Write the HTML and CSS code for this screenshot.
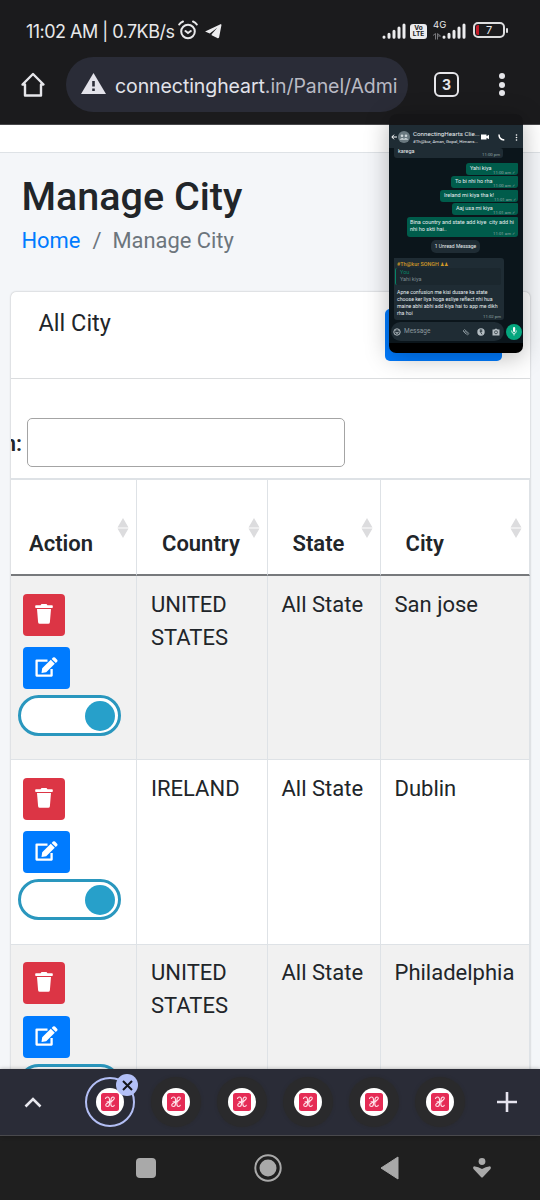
FILE: index.html
```html
<!DOCTYPE html>
<html lang="en">
<head>
<meta charset="utf-8">
<title>Manage City</title>
<link rel="stylesheet" href="styles.css">
</head>
<body>
<svg class="defs" width="0" height="0">
  <symbol id="trash" viewBox="0 0 18 20"><path fill="#fff" d="M6.500 0h5l1 1.200H17q.8 0 .8.800v1.300q0 .7-.7.700H.9q-.7 0-.7-.7V2q0-.8.8-.8h4.500zM2 5h14l-1.100 13.200q-.2 1.500-1.600 1.500H4.700q-1.400 0-1.600-1.500z"/></symbol>
  <symbol id="edit" viewBox="0 0 23 20"><path fill="none" stroke="#fff" stroke-width="2.300" stroke-linejoin="round" d="M12.500 3.600H1.600V18.600H16.600V12"/><path fill="#fff" d="M15.800 2.800l4 4-8.600 8.400-4.700.8.700-4.800zM16.700 1.900l1.300-1.300q1-.9 2 0l2.100 2.100q.9 1 0 2l-1.300 1.300z"/></symbol>
  <symbol id="sort" viewBox="0 0 12 20"><path fill="#dcdcde" d="M6 0l5.500 9.400H.5zM6 20l5.500-9.400H.5z"/></symbol>
  <symbol id="bars" viewBox="0 0 24 16"><path stroke="#ececee" stroke-width="3" stroke-linecap="round" d="M2 14v.3M7 11.200v3.100M12 8.200v6.100M17 5v9.300M22 2v12.300"/></symbol>
  <symbol id="favicon" viewBox="0 0 28 28"><circle cx="14" cy="14" r="14" fill="#fff"/><rect x="5" y="5" width="18" height="18" rx="2.500" fill="#e52b55"/><path fill="none" stroke="#ffe3ea" stroke-width="1.100" stroke-linecap="round" d="M9.500 10.500Q10 9 11.500 9q2 0 2 3v3.500q0 3-2 3-1.800 0-1.800-1.500 0-1.300 3.800-3 4.800-2 4.800-3.800 0-1.200-1.200-1.200-2 0-2.300 3.500v3q0 3 1.700 3 1.500 0 1.800-1.300M11 13.800h5"/></symbol>
</svg>
<div class="screen">
  <header class="browser">
    <div class="status">
      <span class="clock">11:02 AM | 0.7KB/s</span>
      <svg class="alarm" width="20" height="20" viewBox="0 0 20 20" fill="none" stroke="#e8e8ea" stroke-width="2" stroke-linecap="round"><circle cx="10" cy="11.500" r="6.800"/><path d="M1.200 4.500Q2.500 2.500 5 1.500M18.800 4.500Q17.500 2.500 15 1.500M7.500 11l2.500 2 2.800-2"/></svg>
      <svg class="plane" width="17" height="15" viewBox="0 0 18 16"><path fill="#ececee" d="M17 0L0 8l5 2 8-6-6 7v1l6 3c1 .5 1.700 0 2-1L17.500 1z"/></svg>
      <svg class="signal" width="24" height="16"><use href="#bars"/></svg>
      <span class="volte"><span>Vo</span><span>LTE</span></span>
      <span class="network"><span class="net">4G</span><svg width="8" height="7" viewBox="0 0 8 7" fill="none" stroke="#77777b"><path d="M0 2.500L2.500.5v6M4.500 6.500v-6L7.500 3H5"/></svg></span>
      <svg class="signal second" width="24" height="16"><use href="#bars"/></svg>
      <span class="battery"><i></i>7</span>
    </div>
    <div class="toolbar">
      <svg width="26" height="26" viewBox="0 0 26 26" fill="none" stroke="#e6e6ea" stroke-width="2.400" stroke-linejoin="round" stroke-linecap="round"><path d="M2.500 12.500L13 2l10.500 10.500H21V23.500H5V12.500z"/></svg>
      <div class="address">
        <svg width="25" height="21" viewBox="0 0 25 21"><path fill="#e3e3ea" d="M12.500 0L25 21H0z"/><path fill="#2a2c37" d="M11.200 8h2.600v5.500h-2.600zM11.200 15.500h2.600v2.500h-2.600z"/></svg>
        <span class="url">connectingheart<b>.in/Panel/Admi</b></span>
      </div>
      <span class="tabs">3</span>
      <span class="dots"><i></i><i></i><i></i></span>
    </div>
  </header>

  <main class="page">
    <div class="navbar"></div>
    <div class="heading">
      <h1>Manage City</h1>
      <div class="crumbs"><a>Home</a><span class="slash">/</span><span>Manage City</span></div>
    </div>
    <section class="card">
      <div class="card-head"><span>All City</span><div class="add"></div></div>
      <div class="search"><div class="label-clip"><b>n:</b></div><input type="text"></div>
      <div class="row head">
        <div class="cell">Action<svg width="12" height="20"><use href="#sort"/></svg></div>
        <div class="cell">Country<svg width="12" height="20"><use href="#sort"/></svg></div>
        <div class="cell">State<svg width="12" height="20"><use href="#sort"/></svg></div>
        <div class="cell">City<svg width="12" height="20"><use href="#sort"/></svg></div>
      </div>
      <div class="row odd">
        <div class="cell actions"><div class="btn red"><svg width="18" height="20"><use href="#trash"/></svg></div><div class="btn blue"><svg width="23" height="20"><use href="#edit"/></svg></div><div class="switch"><i></i></div></div>
        <div class="cell">UNITED STATES</div><div class="cell">All State</div><div class="cell">San jose</div>
      </div>
      <div class="row">
        <div class="cell actions"><div class="btn red"><svg width="18" height="20"><use href="#trash"/></svg></div><div class="btn blue"><svg width="23" height="20"><use href="#edit"/></svg></div><div class="switch"><i></i></div></div>
        <div class="cell">IRELAND</div><div class="cell">All State</div><div class="cell">Dublin</div>
      </div>
      <div class="row odd">
        <div class="cell actions"><div class="btn red"><svg width="18" height="20"><use href="#trash"/></svg></div><div class="btn blue"><svg width="23" height="20"><use href="#edit"/></svg></div><div class="switch"><i></i></div></div>
        <div class="cell">UNITED STATES</div><div class="cell">All State</div><div class="cell">Philadelphia</div>
      </div>
    </section>
  </main>

  <div class="tabstrip">
    <svg width="18" height="12" viewBox="0 0 18 12" fill="none" stroke="#e8e8ee" stroke-width="2.600"><path d="M1.500 10.500L9 3l7.500 7.500"/></svg>
    <div class="tab active"><svg width="28" height="28"><use href="#favicon"/></svg><span class="close"><svg width="11" height="11" viewBox="0 0 11 11" stroke="#15161c" stroke-width="2"><path d="M1 1l9 9M10 1l-9 9"/></svg></span></div>
    <div class="tab"><svg width="28" height="28"><use href="#favicon"/></svg></div>
    <div class="tab"><svg width="28" height="28"><use href="#favicon"/></svg></div>
    <div class="tab"><svg width="28" height="28"><use href="#favicon"/></svg></div>
    <div class="tab"><svg width="28" height="28"><use href="#favicon"/></svg></div>
    <div class="tab"><svg width="28" height="28"><use href="#favicon"/></svg></div>
    <svg class="plus" width="20" height="20" viewBox="0 0 20 20" stroke="#e6e4ee" stroke-width="2.600"><path d="M10 0v20M0 10h20"/></svg>
  </div>
  <nav class="sysnav">
    <i class="recent"></i>
    <svg class="home" width="28" height="28" viewBox="0 0 28 28"><circle cx="14" cy="14" r="12.700" fill="none" stroke="#a9a9a9" stroke-width="2"/><circle cx="14" cy="14" r="8.500" fill="#a9a9a9"/></svg>
    <svg class="back" width="19" height="24" viewBox="0 0 19 24"><path fill="#a9a9a9" stroke="#a9a9a9" stroke-linejoin="round" d="M1 12L18 1v22z"/></svg>
    <svg class="access" width="18" height="20" viewBox="0 0 18 20" fill="#a9a9a9"><circle cx="9" cy="3.500" r="3.400"/><path d="M1 8.300Q5.500 9 9 11q3.500-2 8-2.700 1.500 1 .5 2.700L10 19q-1 1-2 0L.5 11Q-.5 9.300 1 8.300z"/></svg>
  </nav>

  <aside class="chat">
    <div class="chat-head">
      <svg width="6" height="6" viewBox="0 0 6 6" fill="none" stroke="#fff"><path d="M6 3H1M3 .7L.8 3 3 5.300"/></svg>
      <svg width="12" height="12" viewBox="0 0 12 12"><circle cx="6" cy="6" r="6" fill="#6a7980"/><g fill="#cdd5d8"><circle cx="4" cy="4.800" r="1.300"/><circle cx="8" cy="4.800" r="1.300"/><path d="M1.500 8.700q2.500-3 4.500-.8 2-2.200 4.500.8z"/></g></svg>
      <div class="chat-title"><span>ConnectingHearts Clie...</span><small>#Th@kur, Aman, Gopal, Himans...</small></div>
      <svg class="cam" width="8" height="6" viewBox="0 0 8 6"><path fill="#fff" d="M0 .5h5.500v1.800L8 .8v4.400L5.500 3.700v1.800H0z"/></svg>
      <svg class="call" width="7" height="7" viewBox="0 0 7 7"><path fill="none" stroke="#fff" stroke-width="1.500" d="M1 .5Q1 5.500 6.300 6"/></svg>
      <svg class="more" width="3" height="7" viewBox="0 0 3 7" fill="#fff"><circle cx="1.500" cy="1" r=".8"/><circle cx="1.500" cy="3.500" r=".8"/><circle cx="1.500" cy="6" r=".8"/></svg>
    </div>
    <div class="in first"><span>karega</span><time>11:00 pm</time></div>
    <div class="out b1"><span>Yahi kiya</span><time>11:00 am ✓</time></div>
    <div class="out b2"><span>To bi nhi ho rha</span><time>11:00 am ✓</time></div>
    <div class="out b3"><span>Ireland mi kiya tha k!</span><time>11:01 am ✓</time></div>
    <div class="out b4"><span>Aaj usa mi kiya</span><time>11:01 am ✓</time></div>
    <div class="out b5"><span>Bina country and state add kiye&nbsp; city add hi<br>nhi ho skti hai..</span><time>11:01 am ✓</time></div>
    <div class="unread">1 Unread Message</div>
    <div class="in reply"><strong>#Th@kur SONGH ♟♟</strong><div class="quote"><em>You</em><span>Yahi kiya</span></div><p>Apne confusion me kisi dusare ka state<br>choose ker liya hoga esliye reflect nhi hua<br>maine abhi abhi add kiya hai to app me dikh<br>rha hoi</p><time>11:02 pm</time></div>
    <div class="compose">
      <div class="field">
        <svg width="8" height="8" viewBox="0 0 8 8"><circle cx="4" cy="4" r="3.200" fill="none" stroke="#b4bdc2"/><path d="M2 4.200h4Q4 7.500 2 4.200zM2.300 2.300h1v1h-1zM4.700 2.300h1v1h-1z" fill="#b4bdc2"/></svg>
        <span>Message</span>
        <svg width="8" height="8" viewBox="0 0 8 8" fill="none" stroke="#8d999f" stroke-width=".8"><path d="M1 3l1.500-1.500L7 5.500 5.500 7 2 3.800l1-1 3 2.700M1 3l3 3"/></svg>
        <svg width="8" height="8" viewBox="0 0 8 8"><circle cx="4" cy="4" r="3.700" fill="#b4bdc2"/><path d="M2.700 2h2.600M2.700 3.300h2.600M3.300 2q2 .3.200 2L5 6.300" fill="none" stroke="#1f2c34" stroke-width=".8"/></svg>
        <svg width="8" height="8" viewBox="0 0 8 8"><path fill="#b4bdc2" d="M.5 1.500H2.500L3 .7h2l.5.8h2v6h-7z"/><circle cx="4" cy="4.300" r="1.500" fill="none" stroke="#1f2c34" stroke-width=".7"/></svg>
      </div>
      <div class="mic"><svg width="6" height="9" viewBox="0 0 6 9"><rect x="2" y="0" width="2.200" height="5" rx="1.100" fill="#fff"/><path d="M.6 3.500q0 3 2.400 3t2.400-3M3 6.500v2" fill="none" stroke="#fff" stroke-width=".8"/></svg></div>
    </div>
  </aside>
</div>
</body>
</html>
```
FILE: styles.css
```css
* { box-sizing: border-box; }
body { margin: 0; font-family: Roboto, "Liberation Sans", sans-serif; color: #212529; }
svg { display: block; flex: none; }
.defs { position: absolute; }
.screen { position: relative; width: 540px; height: 1200px; overflow: hidden; display: flex; flex-direction: column; background: #f4f6f9; }

.browser { height: 125px; flex: none; background: #1b1b1d; border-bottom: 1px solid #47474a; }
.status { height: 57px; padding: 5px 35px 0 26px; display: flex; align-items: center; color: #e8e8ea; }
.clock { font: 18px Inter, sans-serif; letter-spacing: -0.53px; width: 149px; white-space: nowrap; }
.alarm { margin-left: 3px; margin-top: -3px; }
.plane { margin-left: 7px; }
.signal { margin-left: auto; }
.volte { width: 17px; height: 15px; margin-left: 4px; background: #ececee; border-radius: 3px; color: #1b1b1d; font: bold 6.500px/6.500px Inter, sans-serif; display: flex; flex-direction: column; align-items: center; justify-content: center; }
.network { width: 14px; height: 20px; margin-left: 6px; display: flex; flex-direction: column; margin-top: -5px; }
.net { font: 9.500px/12px Inter, sans-serif; }
.network svg { margin-top: 2px; }
.second { margin-left: -5px; }
.battery { position: relative; width: 32px; height: 16px; border: 2px solid #dededf; border-radius: 5px; margin-left: 7px; margin-top: -2px; font: 11px/12px Inter, sans-serif; text-align: center; }
.battery::after { content: ""; position: absolute; right: -5px; top: 4px; width: 2px; height: 5px; background: #dededf; border-radius: 1px; }
.battery i { position: absolute; left: 1px; top: 1px; width: 3px; height: 10px; background: #c51d2a; border-radius: 2px 0 0 2px; }
.toolbar { height: 55px; display: flex; align-items: center; padding: 0 34px 0 20px; }
.address { width: 342px; height: 55px; border-radius: 28px; margin-left: 20px; background: #2a2c37; display: flex; align-items: center; padding-left: 15px; gap: 9px; overflow: hidden; }
.address svg { margin-top: -3px; }
.url { font: 19.500px Inter, sans-serif; color: #e1e2e9; letter-spacing: -0.08px; padding-top: 3px; white-space: nowrap; }
.url b { font-weight: 400; color: #b9bac4; }
.tabs { width: 25px; height: 25px; margin-left: 26px; border: 2.500px solid #e6e6ea; border-radius: 6px; color: #e6e6ea; font: bold 14px/21px Inter, sans-serif; text-align: center; }
.dots { margin-left: 39.500px; width: 6px; display: grid; gap: 2.500px; }
.dots i { width: 6px; height: 6px; border-radius: 50%; background: #e6e6ea; }

.page { flex: 1; min-height: 0; overflow: hidden; }
.navbar { height: 28px; background: #fff; border-bottom: 1px solid #dee2e6; }
.heading { height: 139px; padding: 20px 22px 0 21.500px; }
h1 { margin: 0; font-size: 39.500px; line-height: 48px; font-weight: 500; white-space: nowrap; }
.crumbs { display: flex; font-size: 21.900px; line-height: 33px; margin-top: 3px; color: #6c757d; }
.crumbs a { color: #007bff; }
.slash { margin: 0 11px 0 12px; }
.card { margin: 0 10px 0 11px; height: 800px; background: #fff; border-radius: 5px; box-shadow: 0 0 2px rgba(0,0,0,.3); overflow: hidden; }
.card-head { height: 87px; border-bottom: 1px solid #dadcde; display: flex; justify-content: space-between; padding: 14px 28px 0 27.500px; font-size: 23.500px; line-height: 34px; }
.add { width: 117px; height: 52px; border-radius: 5px; background: #007bff; margin-top: 3px; }
.search { height: 99px; display: flex; padding-top: 38.500px; }
.label-clip { width: 15.500px; font-size: 22px; line-height: 51px; overflow: hidden; display: flex; justify-content: flex-end; padding-right: 4.500px; }
.label-clip b { font-weight: 600; }
.search input { width: 318.500px; height: 49.500px; border: 1px solid #a4a4a4; border-radius: 5px; background: #fff; padding: 0; }
.row { display: grid; grid-template-columns: 126px 130.500px 113px 149.500px; height: 184.300px; font-size: 22px; line-height: 33px; }
.cell { padding: 11.500px 14px; border-right: 1.500px solid #dee2e6; border-bottom: 1.500px solid #dee2e6; }
.odd .cell { background: #f1f1f1; }
.head { height: 98px; border-top: 2px solid #dee2e6; }
.head .cell { display: flex; font-weight: 600; padding: 47px 7px 0 18px; justify-content: space-between; border-bottom: 2px solid #77797c; }
.head .cell:nth-child(n+2) { padding-left: 25px; }
.head svg { margin-top: -9px; }
.actions { padding: 17.500px 7px 0; }
.btn { height: 42px; border-radius: 4px; display: flex; align-items: center; justify-content: center; margin-left: 5px; }
.red { width: 41.500px; background: #dc3545; }
.red svg { margin-top: -2px; }
.blue { width: 46.500px; background: #007bff; margin-top: 11.500px; }
.blue svg { margin-top: -2px; }
.switch { width: 103px; height: 41px; margin-top: 6px; margin-left: -.5px; border: 3px solid #2a97be; border-radius: 21px; background: #fff; display: flex; justify-content: flex-end; padding: 2.500px; }
.switch i { width: 30px; height: 30px; border-radius: 50%; background: #27a0ca; }

.tabstrip { height: 67px; flex: none; background: #2a2c37; border-bottom: 1px solid #49494d; display: flex; align-items: center; padding-left: 24px; box-shadow: 0 0 4px rgba(0,0,0,.3); z-index: 1; }
.tab { width: 50px; height: 50px; border-radius: 50%; margin-right: 16px; display: flex; align-items: center; justify-content: center; background: #2a2a2c; box-shadow: 0 0 3px #2a2a2c; }
.active { position: relative; margin-left: 43px; border: 2.500px solid #b3bff5; background: #2a2c37; box-shadow: none; }
.close { position: absolute; top: -5px; right: -5px; width: 22px; height: 22px; border-radius: 50%; background: #b3c0f7; display: flex; align-items: center; justify-content: center; }
.plus { margin-left: 16px; }
.sysnav { height: 64px; flex: none; background: #1f1f1f; display: flex; align-items: center; padding-left: 136px; }
.recent { width: 20px; height: 20px; border-radius: 4px; background: #a9a9a9; }
.home { margin-left: 98px; }
.back { margin-left: 98px; }
.access { margin-left: 74px; }

.chat { position: absolute; z-index: 2; left: 389px; top: 114px; width: 134px; height: 239px; padding-top: 11px; border-radius: 7px; background: linear-gradient(#151517 0 11px, #0b151b 11px 229px, #000 229px); box-shadow: 0 4px 25px rgba(0,0,0,.28); overflow: hidden; display: flex; flex-direction: column; font-size: 5.500px; line-height: 7px; color: #e7edef; white-space: nowrap; }
.chat time { font-size: 4.300px; color: #92a5a3; line-height: 5px; }
.chat-head { height: 23px; flex: none; padding: 1px 5px 0 2px; background: #1f2c34; display: flex; align-items: center; }
.chat-head svg + svg { margin-left: 1px; }
.chat-title { width: 66px; margin-left: 3px; display: flex; flex-direction: column; font-size: 6.200px; line-height: 8px; }
.chat-title small { font-size: 4.400px; line-height: 7px; }
.chat-head .cam { margin-left: 2px; }
.chat-head .call { margin-left: 9px; }
.chat-head .more { margin-left: 9.500px; }
.in { position: relative; background: #1f2c34; margin-left: 5px; border-radius: 0 3px 3px 3px; flex: none; }
.first { width: 109px; height: 10px; display: flex; justify-content: space-between; padding: 0 3px 0 4px; }
.first time { padding-top: 4px; }
.out { flex: none; height: 12px; margin: 0 5px 1.500px auto; background: #005c4b; border-radius: 3px 1px 3px 3px; display: flex; justify-content: space-between; padding: 2px 3px 0 4px; }
.out time { align-self: flex-end; }
.b1 { width: 52px; margin-top: 4.500px; }
.b2 { width: 67px; }
.b3 { width: 78px; }
.b4 { width: 66px; }
.b5 { width: 111px; height: 20px; position: relative; padding-left: 3px; }
.b5 time { position: absolute; right: 3px; bottom: 1px; }
.unread { flex: none; width: 49px; height: 13px; margin: 2px auto 5px 42px; background: #1f2c34; border-radius: 5px; text-align: center; line-height: 13px; font-size: 5px; }
.reply { width: 110px; height: 62px; padding: 1.500px 3px; }
.reply strong { display: block; color: #d19a27; font-size: 5.400px; font-weight: 500; line-height: 8px; }
.quote { height: 17px; margin-left: -2px; border-left: 1px solid #068466; background: #1b272e; padding: 1px 4px; display: flex; flex-direction: column; border-radius: 2px; }
.quote em { color: #068466; font-style: normal; line-height: 7px; }
.quote span { color: #7c898e; }
.reply p { margin: 4px 0 0; font-size: 5.200px; line-height: 7px; }
.reply time { position: absolute; right: 3px; bottom: 1px; }
.compose { display: flex; margin: 2px 1px 0 2px; gap: 2px; align-items: center; }
.field { width: 113px; height: 19px; border-radius: 10px; background: #1f2c34; display: flex; align-items: center; padding: 0 4px 0 2px; gap: 7px; }
.field span { flex: 1; margin-left: -4px; color: #8d999f; font-size: 6.500px; }
.mic { width: 16px; height: 16px; border-radius: 50%; background: #05a67e; display: flex; align-items: center; justify-content: center; }
```
